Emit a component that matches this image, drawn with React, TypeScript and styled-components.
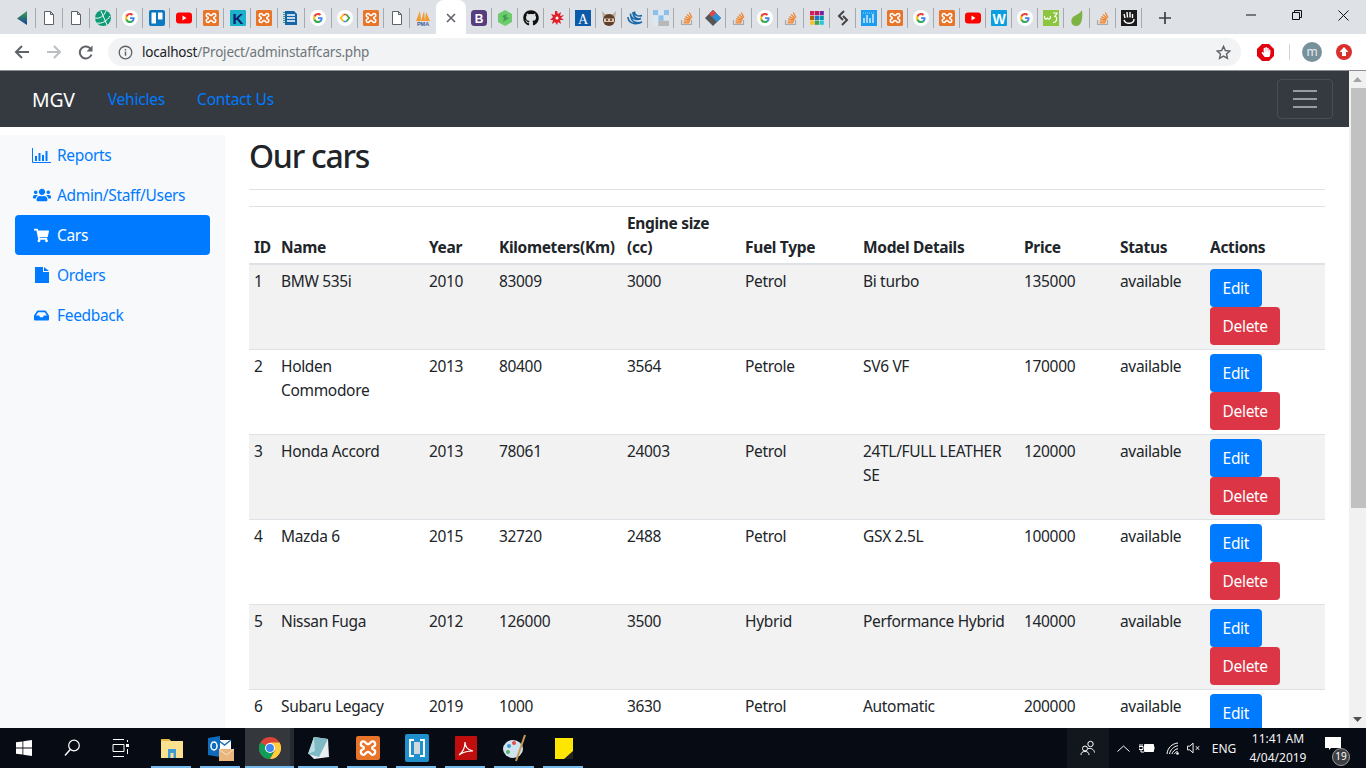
import React from "react";
import styled, { createGlobalStyle } from "styled-components";
import { FaUsers, FaShoppingCart, FaInbox, FaGithub, FaHandPaper } from "react-icons/fa";

const Global = createGlobalStyle`
  html, body { margin: 0; padding: 0; overflow: hidden; background: #fff; }
  * { box-sizing: border-box; }
  body { font-family: "Noto Sans", "Open Sans", sans-serif; font-size: 15.5px; color: #212529; }
`;

const Frame = styled.div`display:flex;flex-direction:column;width:1366px;height:768px;overflow:hidden;`;
const TabStrip = styled.div`display:flex;align-items:stretch;height:34px;background:#dee1e6;padding-left:9px;position:relative;`;
const Tab = styled.div<{ $w: number; $line?: boolean }>`
  width:${p => p.$w}px;flex:none;display:flex;align-items:center;justify-content:center;padding-top:2px;
  position:relative;
  ${p => p.$line ? `&::after{content:"";position:absolute;right:0;top:8px;height:20px;width:1px;background:#a6a9ad;}` : ""}
`;
const ActiveTab = styled.div`
  width:30px;flex:none;background:#fff;border-radius:8px 8px 0 0;display:flex;align-items:center;justify-content:center;padding-top:2px;
`;
const NewTab = styled.div`width:46px;flex:none;display:flex;align-items:center;justify-content:center;padding-top:2px;`;
const WinControls = styled.div`margin-left:auto;display:flex;height:30px;`;
const WinButton = styled.div`width:46px;display:flex;align-items:center;justify-content:center;`;

const Toolbar = styled.div`display:flex;align-items:center;height:36px;flex:none;background:#fff;`;
const NavIcons = styled.div`display:flex;width:108px;padding-left:6px;`;
const NavIcon = styled.div`width:32px;display:flex;justify-content:center;align-items:center;`;
const Omnibox = styled.div`
  width:1133px;height:28px;border-radius:14px;background:#f1f3f4;display:flex;align-items:center;padding:0 10px;
  font-size:13.5px;letter-spacing:-.2px;color:#70757a;
`;
const Host = styled.span`color:#202124;`;
const Url = styled.div`margin-left:9px;flex:1;`;
const Extensions = styled.div`display:flex;align-items:center;flex:1;padding-left:16px;`;
const Divider = styled.div`width:1px;height:16px;background:#d0d3d6;margin:0 12px 0 15px;`;
const Avatar = styled.div`
  width:20px;height:20px;border-radius:50%;background:#78909c;color:#e8edf0;font-size:12px;display:flex;align-items:center;justify-content:center;padding-bottom:2px;
`;

const Viewport = styled.div`flex:1;display:flex;min-height:0;overflow:hidden;border-top:1px solid #8c8f94;`;
const Page = styled.div`width:1349px;display:flex;flex-direction:column;min-height:0;letter-spacing:-.33px;`;
const Navbar = styled.nav`height:56px;flex:none;background:#343a40;display:flex;align-items:center;padding:0 16px 0 32px;`;
const Brand = styled.a`color:#fff;font-size:19.4px;margin-right:17px;letter-spacing:-.2px;`;
const NavLink = styled.a`color:#007bff;padding:0 16px;letter-spacing:-.2px;`;
const Toggler = styled.div`
  margin-left:auto;width:56px;height:40px;border:1px solid rgba(255,255,255,.1);border-radius:4px;
  display:flex;flex-direction:column;align-items:center;justify-content:center;gap:6px;
`;
const TogglerBar = styled.span`width:24px;height:2px;background:rgba(255,255,255,.5);`;
const Body = styled.div`flex:1;display:flex;min-height:0;`;
const Sidebar = styled.aside`width:225px;flex:none;margin-top:8px;background:#f8f9fa;padding:0 15px;`;
const SideLink = styled.a<{ $active?: boolean }>`
  display:flex;align-items:center;height:40px;border-radius:4px;padding-left:17px;gap:6px;
  color:${p => p.$active ? "#fff" : "#007bff"};background:${p => p.$active ? "#007bff" : "transparent"};
`;
const IconSlot = styled.span`width:19px;display:flex;justify-content:center;`;
const Main = styled.main`flex:1;padding:10px 24px 0;min-width:0;overflow:hidden;`;
const PageHead = styled.div`height:53px;border-bottom:1px solid #dee2e6;margin-bottom:16px;`;
const Title = styled.h1`margin:0;font-size:32px;font-weight:500;line-height:38px;letter-spacing:-1.25px;`;
const Table = styled.table`width:1076px;table-layout:fixed;border-collapse:separate;border-spacing:0;border-top:1px solid #dee2e6;`;
const Th = styled.th`
  text-align:left;vertical-align:bottom;font-weight:700;padding:4px 5px 4px;line-height:24px;border-bottom:2px solid #dee2e6;
`;
const Row = styled.tr<{ $odd: boolean }>`background:${p => p.$odd ? "#f2f2f2" : "#fff"};`;
const Td = styled.td<{ $first: boolean }>`
  padding:4px 5px;line-height:24px;vertical-align:top;
  border-top:${p => p.$first ? "0" : "1px solid #dee2e6"};
`;
const Button = styled.a<{ $danger?: boolean }>`
  display:block;width:fit-content;height:38px;line-height:38px;padding:0 12.6px;border-radius:4px;color:#fff;
  background:${p => p.$danger ? "#dc3545" : "#007bff"};
`;
const Scrollbar = styled.div`width:17px;flex:none;background:#f1f1f1;display:flex;flex-direction:column;align-items:center;`;
const ScrollEnd = styled.div`height:17px;flex:none;display:flex;align-items:center;justify-content:center;`;
const Thumb = styled.div`width:15px;height:420px;margin-left:1px;background:#c1c1c1;`;
const Spacer = styled.div`flex:1;`;

const Taskbar = styled.footer`height:40px;flex:none;background:#070b13;display:flex;align-items:stretch;color:#f2f3f4;`;
const TaskSlot = styled.div<{ $w?: number; $on?: boolean; $hot?: boolean }>`
  width:${p => p.$w ?? 48}px;display:flex;align-items:center;justify-content:center;position:relative;
  background:${p => p.$hot ? "linear-gradient(90deg,#34373c 0,#34373c 45px,#26292f 45px)" : "transparent"};
  ${p => p.$on ? `&::after{content:"";position:absolute;bottom:0;height:2px;left:${p.$hot ? 0 : 4}px;right:${p.$hot ? 0 : 5}px;background:#76b9ed;}` : ""}
`;
const StartGroup = styled.div`display:flex;width:147px;`;
const Tray = styled.div`margin-left:auto;display:flex;align-items:stretch;`;
const TrayItem = styled.div<{ $w: number; $lit?: boolean }>`
  width:${p => p.$w}px;display:flex;align-items:center;justify-content:center;font-size:12px;
  background:${p => p.$lit ? "#12161d" : "transparent"};
`;
const Clock = styled.div`width:62px;display:flex;flex-direction:column;align-items:center;justify-content:center;font-size:12px;line-height:19px;white-space:nowrap;`;
const Notify = styled.div`width:57px;display:flex;align-items:center;padding:0 0 9px 16px;position:relative;`;
const Badge = styled.span`
  position:absolute;left:23px;top:20px;width:18px;height:18px;border-radius:50%;background:#3d3f43;border:1px solid #9a9a9a;
  font-size:10px;line-height:15px;text-align:center;color:#fff;
`;
const FavSvg = styled.svg`width:16px;height:16px;display:block;flex:none;`;
const StopWrap = styled.div`width:17px;height:17px;display:flex;align-items:center;justify-content:center;position:relative;`;
const StopShape = styled.svg`position:absolute;left:0;top:0;width:17px;height:17px;`;
const StopHand = styled(FaHandPaper)`position:relative;`;
const UpWrap = styled.div`margin-left:14px;display:flex;`;

const G = () => (
  <FavSvg viewBox="0 0 16 16">
    <circle cx="8" cy="8" r="8" fill="#fff" />
    <path d="M12.600 8.200c0-.4 0-.7-.1-1H8v1.900h2.600c-.1.600-.5 1.100-1 1.500v1.200h1.600c.9-.9 1.400-2.100 1.400-3.600z" fill="#4285f4" />
    <path d="M8 13c1.300 0 2.400-.4 3.200-1.200l-1.600-1.200c-.4.300-1 .5-1.600.5-1.300 0-2.300-.8-2.700-2H3.700v1.300C4.500 12 6.100 13 8 13z" fill="#34a853" />
    <path d="M5.300 9.100c-.2-.7-.2-1.500 0-2.200V5.600H3.700c-.7 1.400-.7 3.400 0 4.800l1.600-1.300z" fill="#fbbc05" />
    <path d="M8 5c.7 0 1.300.2 1.800.7l1.400-1.400C10.400 3.500 9.300 3 8 3 6.100 3 4.500 4 3.700 5.600l1.600 1.300C5.700 5.800 6.700 5 8 5z" fill="#ea4335" />
  </FavSvg>
);
const Doc = () => (
  <FavSvg viewBox="0 0 16 16"><path d="M3.500 1.500h6l3 3v10h-9z M9.500 1.500v3h3" fill="#fff" stroke="#5f6368" strokeWidth="1" /></FavSvg>
);
const knot = "M4.500 7c-2-.5-1.500-3.500.5-3.500 1.500 0 1.500 2 3 2s1.500-2 3-2c2 0 2.500 3 .5 3.500M4.500 9c-2 .5-1.500 3.500.5 3.500 1.500 0 1.500-2 3-2s1.500 2 3 2c2 0 2.500-3 .5-3.500M4.500 7c1 .5 1 1.500 0 2M11.500 7c-1 .5-1 1.500 0 2";
const Xampp = () => (
  <FavSvg viewBox="0 0 16 16">
    <rect width="16" height="16" rx="1.500" fill="#e8742a" />
    <path d={knot} fill="none" stroke="#fff" strokeWidth="1.600" />
  </FavSvg>
);
const Yt = () => (
  <FavSvg viewBox="0 0 16 16"><rect y="2.500" width="16" height="11" rx="3" fill="#f00" /><path d="M6.500 5.500l4 2.500-4 2.500z" fill="#fff" /></FavSvg>
);
const So = () => (
  <FavSvg viewBox="0 0 16 16">
    <path d="M2.500 10v4.500h10V10" fill="none" stroke="#aaa" strokeWidth="1.200" />
    <path d="M4.500 12.800h6M4.700 10.800l6 .7M5.200 8.700l5.800 1.700M6.300 6.500l5.200 3M8 4.300l4.200 4.200M10.300 2.500l2.600 5" stroke="#f48024" strokeWidth="1.200" fill="none" />
  </FavSvg>
);
const Glyph = ({ bg, color, ch, size = 13 }: { bg: string; color: string; ch: string; size?: number }) => (
  <FavSvg viewBox="0 0 16 16">
    <rect width="16" height="16" rx="1" fill={bg} />
    <text x="8" y="13.500" textAnchor="middle" fontSize={size} fontWeight="700" fontFamily="Liberation Sans" fill={color}>{ch}</text>
  </FavSvg>
);

const favs: Record<string, () => React.ReactElement> = {
  arrow: () => <FavSvg viewBox="0 0 16 16"><defs><linearGradient id="ag" x1="0" y1="0" x2="0" y2="1"><stop offset="0" stopColor="#3fa34d" /><stop offset="1" stopColor="#173f9c" /></linearGradient></defs><path d="M13 1v14L3 8.500z" fill="url(#ag)" /></FavSvg>,
  doc: Doc,
  teal: () => <FavSvg viewBox="0 0 16 16"><circle cx="8" cy="8" r="8" fill="#0e9a76" /><path d="M0 8c5 1 9-2 11-7M2 13c5 1 10-2 13-7M6 1l6 14" stroke="#fff" strokeWidth="1" fill="none" /></FavSvg>,
  g: G,
  trello: () => <FavSvg viewBox="0 0 16 16"><rect width="16" height="16" rx="2" fill="#0b79bf" /><rect x="2.500" y="2.500" width="4.500" height="11" rx=".5" fill="#fff" /><rect x="9" y="2.500" width="4.500" height="7" rx=".5" fill="#fff" /></FavSvg>,
  yt: Yt,
  xampp: Xampp,
  k: () => <Glyph bg="#1ab3c9" color="#10206b" ch="K" size={15} />,
  blue: () => <FavSvg viewBox="0 0 16 16"><path d="M2 1h9l3 3v11H2z" fill="#1565a8" /><path d="M4 5h8M4 8h8M4 11h8" stroke="#fff" strokeWidth="1.300" /><path d="M1 2v12" stroke="#0e8a4f" strokeWidth="1.500" strokeDasharray="1 1" /></FavSvg>,
  code: () => <FavSvg viewBox="0 0 16 16"><circle cx="8" cy="8" r="8" fill="#fff" /><path d="M6.500 4.500L3.800 8l2.700 3.500" stroke="#fbbc05" strokeWidth="1.800" fill="none" /><path d="M9.500 4.500L12.200 8l-2.700 3.500" stroke="#34a853" strokeWidth="1.800" fill="none" /><path d="M6.500 4.500h3" stroke="#ea4335" strokeWidth="1.500" /><path d="M6.500 11.500h3" stroke="#4285f4" strokeWidth="1.500" /></FavSvg>,
  pma: () => <FavSvg viewBox="0 0 16 16"><path d="M1 11L5 1l1 10zM6 11L9 1l1 10zM10 11l1-9 4 9z" fill="#f29a2e" /><text x="8" y="16" textAnchor="middle" fontSize="5.500" fontWeight="700" fontFamily="Liberation Sans" fill="#3a5a9c">PMA</text></FavSvg>,
  b: () => <FavSvg viewBox="0 0 16 16"><rect width="16" height="16" rx="3.500" fill="#563d7c" /><text x="8" y="12.500" textAnchor="middle" fontSize="12" fontWeight="700" fontFamily="Liberation Sans" fill="#fff">B</text></FavSvg>,
  hex: () => <FavSvg viewBox="0 0 16 16"><path d="M8 0l7 4v8l-7 4-7-4V4z" fill="#6ccb6c" /><path d="M5 6l5-2-1 3 3 1-6 4 1-4z" fill="#3f9e4a" /></FavSvg>,
  gh: () => <FaGithub size={16} color="#111" />,
  splat: () => <FavSvg viewBox="0 0 16 16"><path d="M8 1l1 3 3-2-1 4 4-1-3 3 3 2-4 0 1 4-3-2-1 3-2-3-3 2 1-4-3 0 3-3-2-3 4 1 0-4z" fill="#e0202a" /><circle cx="8" cy="8" r="1.500" fill="#fff" /></FavSvg>,
  a: () => <FavSvg viewBox="0 0 16 16"><rect width="16" height="16" fill="#0b5ba8" /><text x="8" y="13.500" textAnchor="middle" fontSize="14" fontFamily="Liberation Serif" fill="#fff">A</text></FavSvg>,
  face: () => <FavSvg viewBox="0 0 16 16"><path d="M1 1l3 3h8l3-3-1 7H2z" fill="#b9ad9a" /><circle cx="8" cy="10" r="6" fill="#5d3f2b" /><path d="M3 8.500h10v3.500H3z" fill="#e3c4a8" /><circle cx="6" cy="10" r=".9" fill="#222" /><circle cx="10" cy="10" r=".9" fill="#222" /></FavSvg>,
  jq: () => <FavSvg viewBox="0 0 16 16"><path d="M1 7c0 5 6 9 14 5-5 2-11 0-11-6M3.500 3.500C3 8 9 11 14 8.500 10 9.500 6 7.500 6 2M7.500 1.500C7 5 11 7 15 5.500" fill="none" stroke="#1769aa" strokeWidth="1.600" /></FavSvg>,
  check: () => <FavSvg viewBox="0 0 16 16"><path d="M0 0h5.300v5.300H0zM10.700 0H16v5.300h-5.300zM5.300 5.300h5.400v5.400H5.300z" fill="#8cc0ea" /><path d="M5.300 0h5.400v5.300H5.300zM0 5.300h5.300v5.400H0zM10.700 5.300H16v5.400h-5.300zM0 10.700h5.300V16H0z" fill="#dde7f0" /><path d="M5.300 10.700h5.400V16H5.300zM10.700 10.700H16V16h-5.300z" fill="#b8b8b8" /></FavSvg>,
  so: So,
  diamond: () => <FavSvg viewBox="0 0 16 16"><path d="M8 0l8 8-8 8-8-8z" fill="#555" /><path d="M8 0l8 8-4 4-8-8z" fill="#2a8fd8" /><path d="M4 4l4-4 3 3-4 4z" fill="#e2463c" /></FavSvg>,
  grid: () => <FavSvg viewBox="0 0 16 16">{["#d81b60","#c2185b","#7b1fa2","#b06000","#1976d2","#0097a7","#fbc02d","#43a047","#26c6da"].map((c, i) => <rect key={i} x={1 + (i % 3) * 4.8} y={1 + Math.floor(i / 3) * 4.8} width="4.200" height="4.200" fill={c} />)}</FavSvg>,
  sketch: () => <FavSvg viewBox="0 0 16 16"><path d="M9 1L4 6l4 4M7 15l5-5-4-4" fill="none" stroke="#444" strokeWidth="2" /></FavSvg>,
  chart: () => <FavSvg viewBox="0 0 16 16"><rect width="16" height="16" fill="#1a9cf0" /><path d="M3 13V8M6 13V5M9 13V8M12 13V4" stroke="#fff" strokeWidth="1.200" /><path d="M2 3h12" stroke="#8fd3ff" strokeWidth="1" strokeDasharray="1 1" /></FavSvg>,
  w: () => <Glyph bg="#0aa0e0" color="#fff" ch="W" size={14} />,
  w3: () => <FavSvg viewBox="0 0 16 16"><rect width="16" height="16" fill="#8cc63f" /><path d="M1.500 6c0 4 2.500 4 3 1.500.5 2.500 3 2.500 3-1.500M10 3h4l-2 3.500c2.500 0 2.500 6-2 6" stroke="#fff" strokeWidth="1.200" fill="none" /></FavSvg>,
  leaf: () => <FavSvg viewBox="0 0 16 16"><path d="M13 0c1 8 0 16-6 16C2 16 1 10 4 7c2-2 7-3 9-7z" fill="#7cb342" /></FavSvg>,
  hand: () => <FavSvg viewBox="0 0 16 16"><rect width="16" height="16" fill="#1b1b1b" /><path d="M4 8L3 4M6.500 7.500L6 2M9 7.500V2M11.500 8V4M3 10c2 5 10 4 10-1" stroke="#fff" strokeWidth="1.400" fill="none" /></FavSvg>,
};

const leftTabs = ["arrow","doc","doc","teal","g","trello","yt","xampp","k","xampp","blue","g","code","xampp","doc","pma"];
const rightTabs = ["b","hex","gh","splat","a","face","jq","check","so","diamond","so","g","so","grid","sketch","chart","xampp","g","xampp","yt","w","g","w3","leaf","so","hand"];

const cars = [
  ["1","BMW 535i","2010","83009","3000","Petrol","Bi turbo","135000","available"],
  ["2","Holden Commodore","2013","80400","3564","Petrole","SV6 VF","170000","available"],
  ["3","Honda Accord","2013","78061","24003","Petrol","24TL/FULL LEATHER SE","120000","available"],
  ["4","Mazda 6","2015","32720","2488","Petrol","GSX 2.5L","100000","available"],
  ["5","Nissan Fuga","2012","126000","3500","Hybrid","Performance Hybrid","140000","available"],
  ["6","Subaru Legacy","2019","1000","3630","Petrol","Automatic","200000","available"],
];
const heads = ["ID","Name","Year","Kilometers(Km)","Engine size (cc)","Fuel Type","Model Details","Price","Status","Actions"];
const widths = [27,148,70,128,118,118,161,96,90,120];

const ChromeLogo = ({ size }: { size: number }) => (
  <svg width={size} height={size} viewBox="0 0 24 24">
    <circle cx="12" cy="12" r="12" fill="#db4437" />
    <path d="M12 12L1.600 6A12 12 0 0 0 12 24l5.200-9z" fill="#0f9d58" />
    <path d="M12 6h10.400A12 12 0 0 1 12 24l5.200-9z" fill="#ffcd40" />
    <circle cx="12" cy="12" r="5.500" fill="#fff" />
    <circle cx="12" cy="12" r="4.300" fill="#4285f4" />
  </svg>
);

const taskApps: { key: string; node: React.ReactNode; hot?: boolean }[] = [
  { key: "files", node: <svg width="22" height="20" viewBox="0 0 22 20"><path d="M0 1h8l2 2h12v17H0z" fill="#fbe08f" /><path d="M0 1h8l1 2H0z" fill="#e8b93f" /><path d="M7 11h8v9h-2.500v-5h-3v5H7z" fill="#3d9ad6" /></svg> },
  { key: "outlook", node: <svg width="26" height="26" viewBox="0 0 26 26"><path d="M10 5h13v10H10z" fill="#fff" /><path d="M10 5l6.500 5L23 5" fill="none" stroke="#1a73b8" strokeWidth="1.500" /><path d="M0 3l12-2v21L0 20z" fill="#0f6cbd" /><ellipse cx="6" cy="11" rx="3" ry="4" fill="none" stroke="#fff" strokeWidth="1.500" /><rect x="11" y="14" width="15" height="12" fill="#e9b77d" /><path d="M11 14l7.500 6 7.500-6" fill="none" stroke="#fbe3c4" strokeWidth="1" /></svg> },
  { key: "chrome", node: <ChromeLogo size={22} />, hot: true },
  { key: "notes", node: <svg width="24" height="26" viewBox="0 0 24 26"><path d="M7 2l14 2 1 18-15 2-5-5z" fill="#e8eef0" /><path d="M7 2L1 19l11 3 9-18z" fill="#7fb9c4" /><path d="M7 2L1 19l7-3z" fill="#b7dde3" /></svg> },
  { key: "xampp", node: <svg width="24" height="24" viewBox="0 0 16 16"><rect width="16" height="16" rx="1.500" fill="#e8742a" /><path d={knot} fill="none" stroke="#fff" strokeWidth="1.500" /></svg> },
  { key: "brackets", node: <svg width="24" height="28" viewBox="0 0 24 28"><rect width="24" height="28" rx="2" fill="#1f8fce" /><path d="M9 6H5v16h4M15 6h4v16h-4" fill="none" stroke="#fff" strokeWidth="2" /><rect x="9" y="8" width="6" height="12" fill="#cfd8dc" /></svg> },
  { key: "pdf", node: <svg width="22" height="24" viewBox="0 0 22 24"><rect width="22" height="24" rx="1" fill="#c00d0d" /><path d="M4 19c4-3 6-8 6-13 0 5 3 8 8 9-6 0-10 1-14 4z" fill="none" stroke="#fff" strokeWidth="1.200" /></svg> },
  { key: "paint", node: <svg width="24" height="28" viewBox="0 0 24 28"><ellipse cx="10" cy="15" rx="10" ry="9" fill="#cfe3ee" /><circle cx="6" cy="12" r="2" fill="#3d9ad6" /><circle cx="11" cy="9" r="2" fill="#e34b4b" /><circle cx="5" cy="18" r="2" fill="#58b368" /><path d="M22 1L13 27" stroke="#c89a5b" strokeWidth="2" /></svg> },
  { key: "sticky", node: <svg width="18" height="21" viewBox="0 0 18 21"><path d="M0 0h18v21H0z" fill="#ffe600" /><path d="M18 13v8h-9z" fill="#222" /></svg> },
];

const StopIcon = () => (
  <StopWrap>
    <StopShape viewBox="0 0 18 18"><path d="M5.300 0h7.400L18 5.300v7.400L12.700 18H5.300L0 12.700V5.300z" fill="#e3000f" /></StopShape>
    <StopHand size={10} color="#fff" />
  </StopWrap>
);
const UpBadge = () => (
  <UpWrap>
    <svg width="16" height="16" viewBox="0 0 16 16"><circle cx="8" cy="8" r="8" fill="#d9302c" /><path d="M8 3l4.500 5H10v4H6V8H3.500z" fill="#fff" /></svg>
  </UpWrap>
);
const ReportsIcon = () => (
  <svg width="19" height="15" viewBox="0 0 19 15">
    <path d="M.5 0v14.500H19" fill="none" stroke="currentColor" />
    <path d="M3 8h2v5H3zM6.500 5h2v8h-2zM10 7h2v6h-2zM13.500 3h2v10h-2z" fill="currentColor" />
  </svg>
);
const FileIcon = () => (
  <svg width="14" height="16" viewBox="0 0 14 16">
    <path d="M0 0h8v5h6v11H0zM9 0l5 4H9z" fill="currentColor" />
  </svg>
);

export default function App() {
  return (
    <Frame>
      <Global />
      <TabStrip>
        {leftTabs.map((k, i) => { const F = favs[k]; return <Tab key={i} $w={i < 12 ? 26.9 : 26} $line={i < 15}><F /></Tab>; })}
        <ActiveTab>
          <svg width="10" height="10" viewBox="0 0 10 10"><path d="M1 1l8 8M9 1l-8 8" stroke="#5f6368" strokeWidth="1.600" /></svg>
        </ActiveTab>
        {rightTabs.map((k, i) => { const F = favs[k]; return <Tab key={i} $w={26} $line><F /></Tab>; })}
        <NewTab>
          <svg width="12" height="12" viewBox="0 0 12 12"><path d="M6 0v12M0 6h12" stroke="#3c4043" strokeWidth="1.700" /></svg>
        </NewTab>
        <WinControls>
          <WinButton><svg width="10" height="10" viewBox="0 0 10 10"><path d="M0 5h10" stroke="#111" /></svg></WinButton>
          <WinButton><svg width="10" height="10" viewBox="0 0 10 10"><path d="M.5 2.500h7v7h-7zM2.500 2.500v-2h7v7h-2" fill="none" stroke="#111" /></svg></WinButton>
          <WinButton><svg width="11" height="11" viewBox="0 0 11 11"><path d="M.5.500l10 10M10.500.500l-10 10" stroke="#111" /></svg></WinButton>
        </WinControls>
      </TabStrip>
      <Toolbar>
        <NavIcons>
          <NavIcon><svg width="16" height="16" viewBox="0 0 16 16"><path d="M15 8H2M8 2L2 8l6 6" fill="none" stroke="#5f6368" strokeWidth="2" /></svg></NavIcon>
          <NavIcon><svg width="16" height="16" viewBox="0 0 16 16"><path d="M1 8h13M8 2l6 6-6 6" fill="none" stroke="#bcbfc3" strokeWidth="2" /></svg></NavIcon>
          <NavIcon><svg width="16" height="16" viewBox="0 0 16 16"><path d="M13.500 10.500a6 6 0 1 1-.6-5.200" fill="none" stroke="#5f6368" strokeWidth="2" /><path d="M14.500 1.500v6h-6z" fill="#5f6368" /></svg></NavIcon>
        </NavIcons>
        <Omnibox>
          <svg width="15" height="15" viewBox="0 0 16 16"><circle cx="8" cy="8" r="6.700" fill="none" stroke="#5f6368" strokeWidth="1.400" /><path d="M8 7v4.500M8 4.300v1.500" stroke="#5f6368" strokeWidth="1.500" /></svg>
          <Url><Host>localhost</Host>/Project/adminstaffcars.php</Url>
          <svg width="15" height="15" viewBox="0 0 16 16"><path d="M8 1.500l2 4.400 4.800.5-3.600 3.200 1 4.700L8 11.900l-4.200 2.400 1-4.700L1.200 6.400 6 5.900z" fill="none" stroke="#5f6368" strokeWidth="1.500" /></svg>
        </Omnibox>
        <Extensions>
          <StopIcon />
          <Divider />
          <Avatar>m</Avatar>
          <UpBadge />
        </Extensions>
      </Toolbar>
      <Viewport>
        <Page>
          <Navbar>
            <Brand>MGV</Brand>
            <NavLink>Vehicles</NavLink>
            <NavLink>Contact Us</NavLink>
            <Toggler><TogglerBar /><TogglerBar /><TogglerBar /></Toggler>
          </Navbar>
          <Body>
            <Sidebar>
              <SideLink><IconSlot><ReportsIcon /></IconSlot>Reports</SideLink>
              <SideLink><IconSlot><FaUsers size={18} /></IconSlot>Admin/Staff/Users</SideLink>
              <SideLink $active><IconSlot><FaShoppingCart size={15} /></IconSlot>Cars</SideLink>
              <SideLink><IconSlot><FileIcon /></IconSlot>Orders</SideLink>
              <SideLink><IconSlot><FaInbox size={15} /></IconSlot>Feedback</SideLink>
            </Sidebar>
            <Main>
              <PageHead><Title>Our cars</Title></PageHead>
              <Table>
                <colgroup>{widths.map((w, i) => <col key={i} width={w} />)}</colgroup>
                <thead><tr>{heads.map(h => <Th key={h}>{h}</Th>)}</tr></thead>
                <tbody>
                  {cars.map((c, i) => (
                    <Row key={c[0]} $odd={i % 2 === 0}>
                      {c.map((v, j) => <Td key={j} $first={i === 0}>{v}</Td>)}
                      <Td $first={i === 0}>
                        <Button>Edit</Button>
                        {i < 5 && <Button $danger>Delete</Button>}
                      </Td>
                    </Row>
                  ))}
                </tbody>
              </Table>
            </Main>
          </Body>
        </Page>
        <Scrollbar>
          <ScrollEnd><svg width="9" height="5" viewBox="0 0 9 5"><path d="M4.500 0L9 5H0z" fill="#a3a3a3" /></svg></ScrollEnd>
          <Thumb />
          <Spacer />
          <ScrollEnd><svg width="9" height="5" viewBox="0 0 9 5"><path d="M4.500 5L9 0H0z" fill="#505050" /></svg></ScrollEnd>
        </Scrollbar>
      </Viewport>
      <Taskbar>
        <StartGroup>
          <TaskSlot><svg width="16" height="16" viewBox="0 0 16 16"><path d="M0 2.300l6.500-.9v6.200H0zM7.300 1.300L16 0v7.600H7.300zM0 8.400h6.500v6.200L0 13.700zM7.300 8.400H16V16l-8.700-1.200z" fill="#fff" /></svg></TaskSlot>
          <TaskSlot><svg width="16" height="18" viewBox="0 0 16 18"><circle cx="10" cy="6.500" r="5.300" fill="none" stroke="#fff" strokeWidth="1.200" /><path d="M6.200 10.500L1 16.500" stroke="#fff" strokeWidth="1.400" /></svg></TaskSlot>
          <TaskSlot><svg width="17" height="18" viewBox="0 0 17 18"><path d="M1 .5h11M1 17.500h11M1 5.500h11v7H1z" fill="none" stroke="#fff" /><path d="M14 5h3v3h-3z" fill="#fff" /><path d="M15 10h1v5h-1zM15 1h1v2h-1z" fill="#fff" /></svg></TaskSlot>
        </StartGroup>
        {taskApps.map(a => (
          <TaskSlot key={a.key} $w={49} $on $hot={a.hot}>{a.node}</TaskSlot>
        ))}
        <Tray>
          <TrayItem $w={42} $lit><svg width="16" height="16" viewBox="0 0 16 16"><circle cx="5" cy="8.500" r="2.500" fill="none" stroke="#fff" /><circle cx="10.500" cy="4" r="2.700" fill="none" stroke="#fff" /><path d="M1 15c0-2.500 1.500-3.500 4-3.500s4 1 4 3.500M8 8.500c3-.5 6 .5 6.500 4" fill="none" stroke="#fff" /></svg></TrayItem>
          <TrayItem $w={28}><svg width="13" height="7" viewBox="0 0 13 7"><path d="M.5 6.500L6.500 1l6 5.500" fill="none" stroke="#fff" /></svg></TrayItem>
          <TrayItem $w={20}><svg width="16" height="10" viewBox="0 0 16 10"><path d="M5.500 1.500h9v7h-9z" fill="#fff" stroke="#fff" /><path d="M15 3.500v3" stroke="#fff" /><path d="M0 3.500h4v3H0zM1 1v2.500M3 1v2.500M2 6.500V9h3" fill="none" stroke="#fff" /></svg></TrayItem>
          <TrayItem $w={30}><svg width="13" height="13" viewBox="0 0 13 13"><path d="M1 12C1.500 6 6 1.500 12 1M3.500 12C4 8 8 4 12 3.800M6 12c.3-2 3-5 6-5.300M8.500 12c.3-1 1.500-2.500 3-2.500" fill="none" stroke="#fff" strokeWidth="1" /><circle cx="11.500" cy="11.500" r="1.300" fill="#fff" /></svg></TrayItem>
          <TrayItem $w={14}><svg width="15" height="12" viewBox="0 0 15 12"><path d="M.5 4h2.500L6.500.8v10.400L3 8H.5zM9.500 4l3.500 4M13 4l-3.500 4" fill="none" stroke="#fff" /></svg></TrayItem>
          <TrayItem $w={46}>ENG</TrayItem>
          <Clock><span>11:41 AM</span><span>4/04/2019</span></Clock>
          <Notify>
            <svg width="16" height="13" viewBox="0 0 16 13"><path d="M0 0h16v11H6l-2 2v-2H0z" fill="#fff" /></svg>
            <Badge>19</Badge>
          </Notify>
        </Tray>
      </Taskbar>
    </Frame>
  );
}
